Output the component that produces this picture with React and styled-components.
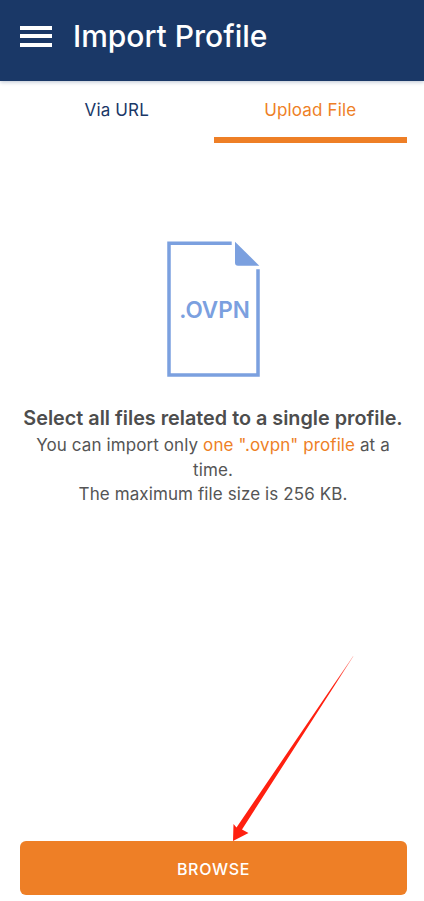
import React from "react";
import styled, { createGlobalStyle } from "styled-components";

const Global = createGlobalStyle`
  html, body { margin: 0; padding: 0; background: #fff; }
  body { font-family: Inter, "Liberation Sans", sans-serif; }
`;

const Page = styled.div`
  position: relative;
  width: 424px;
  height: 901px;
  display: flex;
  flex-direction: column;
  overflow: hidden;
  background: #fff;
`;

const Header = styled.header`
  height: 81px;
  flex: none;
  display: flex;
  align-items: center;
  gap: 21px;
  padding: 0 20px 9px;
  box-sizing: border-box;
  background: #1a3867;
  box-shadow: 0 1px 4px rgba(26, 56, 103, 0.3);
`;

const MenuButton = styled.div`
  width: 32px;
  height: 21px;
  display: flex;
  flex-direction: column;
  justify-content: space-between;
`;

const MenuLine = styled.span`
  display: block;
  height: 4px;
  background: #fff;
`;

const Title = styled.h1`
  margin: 0;
  font-size: 30px;
  font-weight: 500;
  color: #fff;
  line-height: 36px;
`;

const Tabs = styled.nav`
  display: flex;
  padding: 0 17px 0 20px;
  height: 62px;
  flex: none;
`;

const Tab = styled.div`
  flex: 1;
  display: flex;
  align-items: flex-start;
  justify-content: center;
  padding-top: 17px;
  box-sizing: border-box;
  font-size: 17px;
  line-height: 24px;
  letter-spacing: 0.15px;
  color: ${(p) => (p.$active ? "#ee7f26" : "#1a3867")};
  border-bottom: 6px solid ${(p) => (p.$active ? "#ee7f26" : "transparent")};
`;

const Content = styled.main`
  flex: 1;
  display: flex;
  flex-direction: column;
  align-items: center;
  padding: 98px 20px 0 22px;
`;

const FileIcon = styled.svg`
  width: 94px;
  height: 137px;
  display: block;
  flex: none;
  margin-left: 2px;
`;

const Heading = styled.h2`
  margin: 27px -6px 0;
  font-size: 19.8px;
  line-height: 26px;
  font-weight: 600;
  color: #4d4d4d;
  text-align: center;
  white-space: nowrap;
`;

const Body = styled.p`
  margin: 2px 0 0;
  font-size: 17px;
  line-height: 24.5px;
  color: #555;
  text-align: center;
  letter-spacing: 0.1px;
`;

const Accent = styled.span`
  color: #ee7f26;
`;

const Footer = styled.footer`
  padding: 0 17px 6px 20px;
`;

const BrowseButton = styled.button`
  width: 100%;
  height: 54px;
  display: block;
  border: 0;
  border-radius: 6px;
  padding: 2px 0 0;
  background: #ee7f26;
  color: #fff;
  font-family: inherit;
  font-size: 16px;
  font-weight: 500;
  letter-spacing: 0.7px;
`;

const Arrow = styled.svg`
  position: absolute;
  left: 0;
  top: 0;
  width: 424px;
  height: 901px;
  pointer-events: none;
`;

export default function App() {
  return (
    <Page>
      <Global />
      <Header>
        <MenuButton>
          <MenuLine />
          <MenuLine />
          <MenuLine />
        </MenuButton>
        <Title>Import Profile</Title>
      </Header>
      <Tabs>
        <Tab>Via URL</Tab>
        <Tab $active>Upload File</Tab>
      </Tabs>
      <Content>
        <FileIcon viewBox="0 0 94 137">
          <path d="M64.7 2.3H2V134H91V28.3" fill="none" stroke="#7ba0df" strokeWidth="3.5" />
          <path d="M68 .7L92.3 24.7H71a3 3 0 0 1-3-3Z" fill="#7ba0df" />
          <text x="47.5" y="77" textAnchor="middle" fontFamily="Inter, sans-serif" fontSize="22.5" fontWeight="600" fill="#7ba0df">.OVPN</text>
        </FileIcon>
        <Heading>Select all files related to a single profile.</Heading>
        <Body>
          You can import only <Accent>one ".ovpn" profile</Accent> at a time.
          <br />
          The maximum file size is 256 KB.
        </Body>
      </Content>
      <Footer>
        <BrowseButton>BROWSE</BrowseButton>
      </Footer>
      <Arrow viewBox="0 0 424 901">
        <defs>
          <linearGradient id="tail" x1="353" y1="656" x2="335" y2="684" gradientUnits="userSpaceOnUse">
            <stop offset="0" stopColor="#ff2010" stopOpacity="0.5" />
            <stop offset="1" stopColor="#ff2010" />
          </linearGradient>
        </defs>
        <path d="M353.4 656.3L353 656.2L236.5 827.5L233.5 824L233 841L248.5 833L242 829.5Z" fill="url(#tail)" />
      </Arrow>
    </Page>
  );
}
